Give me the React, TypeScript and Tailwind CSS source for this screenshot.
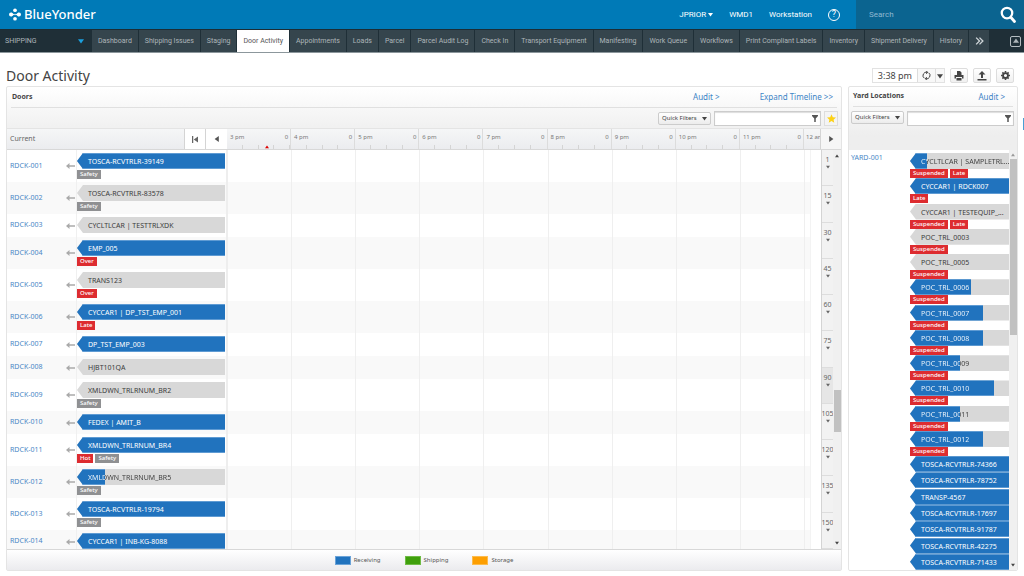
import { Fragment } from 'react';
import type { ReactNode } from 'react';

interface Trailer {
  label: string;
  fill: number;
  tags?: string[];
}

interface Door extends Trailer {
  id: string;
}

const TABS = [
  'Dashboard',
  'Shipping Issues',
  'Staging',
  'Door Activity',
  'Appointments',
  'Loads',
  'Parcel',
  'Parcel Audit Log',
  'Check In',
  'Transport Equipment',
  'Manifesting',
  'Work Queue',
  'Workflows',
  'Print Compliant Labels',
  'Inventory',
  'Shipment Delivery',
  'History',
];

const DOORS: Door[] = [
  { id: 'RDCK-001', label: 'TOSCA-RCVTRLR-39149', fill: 100, tags: ['Safety'] },
  { id: 'RDCK-002', label: 'TOSCA-RCVTRLR-83578', fill: 0, tags: ['Safety'] },
  { id: 'RDCK-003', label: 'CYCLTLCAR | TESTTRLXDK', fill: 0 },
  { id: 'RDCK-004', label: 'EMP_005', fill: 100, tags: ['Over'] },
  { id: 'RDCK-005', label: 'TRANS123', fill: 0, tags: ['Over'] },
  { id: 'RDCK-006', label: 'CYCCAR1 | DP_TST_EMP_001', fill: 100, tags: ['Late'] },
  { id: 'RDCK-007', label: 'DP_TST_EMP_003', fill: 100 },
  { id: 'RDCK-008', label: 'HJBT101QA', fill: 0 },
  { id: 'RDCK-009', label: 'XMLDWN_TRLRNUM_BR2', fill: 0, tags: ['Safety'] },
  { id: 'RDCK-010', label: 'FEDEX | AMIT_B', fill: 100 },
  { id: 'RDCK-011', label: 'XMLDWN_TRLRNUM_BR4', fill: 100, tags: ['Hot', 'Safety'] },
  { id: 'RDCK-012', label: 'XMLDWN_TRLRNUM_BR5', fill: 19, tags: ['Safety'] },
  { id: 'RDCK-013', label: 'TOSCA-RCVTRLR-19794', fill: 100, tags: ['Safety'] },
  { id: 'RDCK-014', label: 'CYCCAR1 | INB-KG-8088', fill: 100 },
];

const YARD: Trailer[] = [
  { label: 'CYCLTLCAR | SAMPLETRL...', fill: 17, tags: ['Suspended', 'Late'] },
  { label: 'CYCCAR1 | RDCK007', fill: 100, tags: ['Late'] },
  { label: 'CYCCAR1 | TESTEQUIP_...', fill: 0, tags: ['Suspended', 'Late'] },
  { label: 'POC_TRL_0003', fill: 0, tags: ['Suspended'] },
  { label: 'POC_TRL_0005', fill: 0, tags: ['Suspended'] },
  { label: 'POC_TRL_0006', fill: 62, tags: ['Suspended'] },
  { label: 'POC_TRL_0007', fill: 74, tags: ['Suspended'] },
  { label: 'POC_TRL_0008', fill: 74, tags: ['Suspended'] },
  { label: 'POC_TRL_0009', fill: 51, tags: ['Suspended'] },
  { label: 'POC_TRL_0010', fill: 85, tags: ['Suspended'] },
  { label: 'POC_TRL_0011', fill: 51, tags: ['Suspended'] },
  { label: 'POC_TRL_0012', fill: 74, tags: ['Suspended'] },
  { label: 'TOSCA-RCVTRLR-74366', fill: 100 },
  { label: 'TOSCA-RCVTRLR-78752', fill: 100 },
  { label: 'TRANSP-4567', fill: 100 },
  { label: 'TOSCA-RCVTRLR-17697', fill: 100 },
  { label: 'TOSCA-RCVTRLR-91787', fill: 100 },
  { label: 'TOSCA-RCVTRLR-42275', fill: 100 },
  { label: 'TOSCA-RCVTRLR-71433', fill: 100 },
];

const HOURS = ['3 pm', '4 pm', '5 pm', '6 pm', '7 pm', '8 pm', '9 pm', '10 pm', '11 pm'];
const PAGES = [1, 15, 30, 45, 60, 75, 90, 105, 120, 135, 150];

const LEGEND = [
  { label: 'Receiving', color: 'bg-[#2173be] border-[#6ba3d8]' },
  { label: 'Shipping', color: 'bg-[#3f9f0c] border-[#6fbb46]' },
  { label: 'Storage', color: 'bg-[#fd9f02] border-[#fdbb4c]' },
];

const Triangle = ({ dir, className }: { dir: 'up' | 'down' | 'left' | 'right'; className: string }) => {
  const points = {
    up: '0,8 10,8 5,1',
    down: '0,2 10,2 5,9',
    left: '8,0 8,10 1,5',
    right: '2,0 2,10 9,5',
  };
  return (
    <svg viewBox="0 0 10 10" className={className} fill="currentColor" aria-hidden="true">
      <polygon points={points[dir]} />
    </svg>
  );
};

const Logo = () => (
  <svg viewBox="0 0 24 26" className="h-[13px] w-3" fill="#fff" aria-hidden="true">
    <circle cx="12" cy="4.500" r="3.700" />
    <circle cx="12" cy="21.500" r="3.700" />
    <circle cx="4" cy="13" r="4" />
    <circle cx="20" cy="13" r="4" />
    <path d="M4 9l7 4-7 4zM20 9l-7 4 7 4z" />
    <circle cx="12" cy="13" r="1.500" />
  </svg>
);

const Tag = ({ name }: { name: string }) => (
  <span
    className={`h-[9px] px-[3px] text-[6px] leading-[9px] font-medium text-white ${
      name === 'Safety' ? 'bg-[#8f9092]' : 'bg-[#dd2c30]'
    }`}
  >
    {name}
  </span>
);

const TagList = ({ tags }: { tags: string[] }) => (
  <div className="flex gap-0.5">
    {tags.map((tag) => (
      <Tag key={tag} name={tag} />
    ))}
  </div>
);

const TrailerBar = ({ label, fill }: Trailer) => {
  const partial = fill > 0 && fill < 100;
  return (
    <div className="relative h-4 bg-[#d8d8d8] text-[7px] leading-[17px] [clip-path:polygon(6px_0,100%_0,100%_100%,6px_100%,0_50%)]">
      {fill > 0 && (
        <div
          className="absolute inset-y-0 left-0 border-y border-[#5f9bd3] bg-[#2173be]"
          style={{ width: `${fill}%` }}
        />
      )}
      <span
        className={`relative block pl-[11px] whitespace-nowrap ${
          partial ? 'bg-clip-text text-transparent' : fill ? 'text-white' : 'text-[#3c3c3c]'
        }`}
        style={
          partial
            ? { backgroundImage: `linear-gradient(to right, #fff ${fill}%, #3c3c3c ${fill}%)` }
            : undefined
        }
      >
        {label}
      </span>
    </div>
  );
};

const QuickFilters = () => (
  <button className="flex h-[13px] w-[53px] shrink-0 items-center justify-between rounded-xs border border-[#ccc] bg-linear-to-b from-white to-[#ececec] px-[3px] text-[6px] whitespace-nowrap text-[#444]">
    Quick Filters
    <Triangle dir="down" className="size-[5px]" />
  </button>
);

const FilterBox = ({ label }: { label: string }) => (
  <div className="relative h-[15px] w-[107px]">
    <input
      type="text"
      aria-label={label}
      className="block h-full w-full border border-[#ccc] bg-white pr-3 pl-1 text-[7px] shadow-[inset_0_1px_1px_#ddd] outline-none"
    />
    <svg viewBox="0 0 12 14" className="absolute top-1 right-[3px] h-[7px] w-1.5" fill="#555" aria-hidden="true">
      <path d="M0 0h12v2L7.500 7v7h-3V7L0 2z" />
    </svg>
  </div>
);

const IconButton = ({ label, children }: { label: string; children: ReactNode }) => (
  <button
    aria-label={label}
    className="flex h-[15px] w-[18px] items-center justify-center rounded-xs border border-[#ddd] bg-linear-to-b from-white to-[#f0f0f0] text-[#444]"
  >
    {children}
  </button>
);

const Header = () => (
  <header className="flex h-[29px] shrink-0 items-stretch bg-[#007ab7] text-white">
    <div className="flex items-center gap-[3px] pl-[9px] text-[13px] leading-none font-medium">
      <Logo />
      BlueYonder
    </div>
    <div className="ml-auto flex items-center gap-4 pr-4 font-['Roboto',sans-serif] text-[8px]">
      <button className="flex items-center gap-0.5">
        JPRIOR
        <Triangle dir="down" className="size-[5px]" />
      </button>
      <a href="#wmd1">WMD1</a>
      <a href="#workstation">Workstation</a>
      <button
        aria-label="Help"
        className="flex size-3 items-center justify-center rounded-full border border-white text-[9px] leading-none"
      >
        ?
      </button>
    </div>
    <div className="flex w-[168px] items-center bg-[#0b6490] pr-2 pl-[13px]">
      <input
        type="search"
        placeholder="Search"
        aria-label="Search"
        className="min-w-0 flex-1 bg-transparent font-['Roboto',sans-serif] text-[8px] text-white outline-none placeholder:text-[#8fb8d0]"
      />
      <button aria-label="Run search">
        <svg viewBox="0 0 32 34" className="h-[17px] w-4" fill="none" stroke="#fff" aria-hidden="true">
          <circle cx="14" cy="14" r="10.500" strokeWidth="4.500" />
          <path d="M22 23l7 8" strokeWidth="5.500" strokeLinecap="round" />
        </svg>
      </button>
    </div>
  </header>
);

const NavBar = () => (
  <nav className="flex h-6 shrink-0 items-stretch border-t border-b border-t-[#1c2d35] border-b-[#8c979c] bg-[#1f2f37] font-['Roboto',sans-serif] text-[7px] text-[#adb5b9]">
    <div className="relative w-[92px]">
      <select
        aria-label="Module"
        className="h-full w-full appearance-none bg-transparent pl-[5px] text-[7px] outline-none"
      >
        <option>SHIPPING</option>
      </select>
      <Triangle dir="down" className="pointer-events-none absolute top-2 right-2 size-1.5 text-[#1ba1e0]" />
    </div>
    <div className="flex flex-1 gap-px">
      {TABS.map((tab) => (
        <a
          key={tab}
          href={`#${tab}`}
          className={`flex flex-auto items-center justify-center whitespace-nowrap ${
            tab === 'Door Activity' ? 'bg-white text-[#555]' : 'bg-[#35454d]'
          }`}
        >
          {tab}
        </a>
      ))}
      <button aria-label="More tabs" className="flex w-5 items-center justify-center bg-[#35454d]">
        <svg viewBox="0 0 16 14" className="h-2 w-[9px]" fill="none" stroke="#cfd5d8" strokeWidth="2.400" aria-hidden="true">
          <path d="M2 1l6 6-6 6M8 1l6 6-6 6" />
        </svg>
      </button>
    </div>
    <div className="flex w-[35px] items-center justify-end pr-[3px]">
      <button
        aria-label="Collapse"
        className="flex size-[11px] items-center justify-center rounded-xs border border-[#b4bcc0]"
      >
        <Triangle dir="up" className="size-1.5" />
      </button>
    </div>
  </nav>
);

const TitleRow = () => (
  <div className="flex h-[33px] shrink-0 items-center pt-3 pr-1">
    <h1 className="text-[14px] leading-none text-[#444]">Door Activity</h1>
    <div className="ml-auto flex items-center gap-[5px]">
      <div className="flex h-[15px] items-center border border-[#e2e2e2] text-[9px] text-[#444]">
        <span className="px-[5px]">3:38 pm</span>
        <button aria-label="Refresh" className="flex h-full w-[18px] items-center justify-center border-l border-[#ddd] bg-[#f8f8f8]">
          <svg viewBox="0 0 20 20" className="size-[9px]" fill="none" stroke="#444" strokeWidth="2.200" aria-hidden="true">
            <path d="M5 16A7.500 7.500 0 0 1 12 3M15 4a7.500 7.500 0 0 1-7 13" />
            <path d="M9 0l4 3-4 3M11 20l-4-3 4-3" />
          </svg>
        </button>
        <button aria-label="Refresh options" className="flex h-full w-[9px] items-center justify-center border-l border-[#ddd] bg-[#f8f8f8]">
          <Triangle dir="down" className="size-1.5" />
        </button>
      </div>
      <IconButton label="Print">
        <svg viewBox="0 0 20 20" className="size-2.5" fill="currentColor" aria-hidden="true">
          <path d="M6 0h6l3 3v5H6zM1 8h18v7h-3v-3H4v3H1zM5 14h10v5H5z" />
        </svg>
      </IconButton>
      <IconButton label="Export">
        <svg viewBox="0 0 20 20" className="size-2.5" fill="currentColor" aria-hidden="true">
          <path d="M10 0l7 7h-5v7H8V7H3zM1 16h18v3H1z" />
        </svg>
      </IconButton>
      <IconButton label="Settings">
        <svg viewBox="0 0 20 20" className="size-[9px]" fill="none" stroke="currentColor" aria-hidden="true">
          <circle cx="10" cy="10" r="5.500" strokeWidth="4" />
          <path
            d="M10 0v4M10 16v4M0 10h4M16 10h4M3 3l3 3M14 14l3 3M17 3l-3 3M6 14l-3 3"
            strokeWidth="3.500"
          />
        </svg>
      </IconButton>
    </div>
  </div>
);

const TimelineHeader = () => (
  <div className="flex h-[22px] shrink-0 items-stretch border-t border-b border-t-[#e4e4e4] border-b-[#d8d8d8] bg-linear-to-b from-[#f5f6f7] to-[#ebecef] text-[7px] text-[#666]">
    <div className="flex w-[177px] items-center pl-[3px]">Current</div>
    <button aria-label="Jump to start" className="flex w-[21px] items-center justify-center border-l border-[#d4d4d4] bg-white">
      <svg viewBox="0 0 12 14" className="h-[7px] w-1.5" fill="#666" aria-hidden="true">
        <path d="M0 0h2.500v14H0zM12 1v12L3.500 7z" />
      </svg>
    </button>
    <button aria-label="Earlier" className="flex w-[22px] items-center justify-center border-l border-[#d4d4d4] bg-white">
      <Triangle dir="left" className="size-1.5 text-[#555]" />
    </button>
    <div className="flex flex-1 overflow-hidden text-[6px] leading-none text-[#777]">
      {HOURS.map((hour, i) => (
        <div key={hour} className="flex flex-1 flex-col justify-between border-r border-[#dcdcdc]">
          <div className="flex justify-between pt-[5px] pr-0.5 pl-[3px]">
            <span>{hour}</span>
            <span>0</span>
          </div>
          <div className="relative grid h-1 grid-cols-4 divide-x divide-[#d4d4d4]">
            <span />
            <span />
            <span />
            <span />
            {i === 0 && <Triangle dir="up" className="absolute bottom-0 left-[38px] size-1 text-[#d00]" />}
          </div>
        </div>
      ))}
      <div className="w-4 pt-[5px] pl-0.5 whitespace-nowrap">12 am</div>
    </div>
    <button aria-label="Later" className="flex w-[21px] items-center justify-center border-l border-[#d4d4d4] bg-[#f6f6f6]">
      <Triangle dir="right" className="size-1.5 text-[#555]" />
    </button>
  </div>
);

const DoorRow = ({ id, ...trailer }: Door) => (
  <li className="flex min-h-[23px] shrink-0 bg-white even:bg-[#f9f9f9]">
    <a href={`#${id}`} className="flex w-[59px] items-center pl-[3px] text-[7px] text-[#4a87c6]">
      {id}
    </a>
    <div className="flex w-[11px] items-center border-r border-[#f0f0f0]">
      <svg viewBox="0 0 18 12" className="h-1.5 w-[9px]" fill="#aaa" aria-hidden="true">
        <path d="M7 0v4.500h11v3H7V12L0 6z" />
      </svg>
    </div>
    <div className="flex w-[148px] flex-col gap-px py-[3px]">
      <TrailerBar {...trailer} />
      {trailer.tags && <TagList tags={trailer.tags} />}
    </div>
    <div className="ml-px w-0.5 bg-[#eee]" />
    <div className="flex flex-1">
      {HOURS.map((hour) => (
        <div key={hour} className="flex-1 border-r border-[#efefef]" />
      ))}
      <div className="w-1.5 border-r border-[#f3f3f3]" />
      <div className="w-2.5 bg-white" />
    </div>
  </li>
);

const DoorsPanel = () => (
  <section className="flex min-w-0 flex-1 flex-col overflow-hidden rounded-xs border border-[#e4e4e4] bg-linear-to-b from-white to-[#eee] to-10%">
    <div className="mx-1 flex h-[21px] shrink-0 items-center border-b border-[#e0e0e0] pr-1 text-[8px] text-[#3d84c6]">
      <h2 className="pl-px text-[7px] font-bold text-[#444]">Doors</h2>
      <a href="#audit-doors" className="ml-auto">
        Audit &gt;
      </a>
      <a href="#timeline" className="ml-10">
        Expand Timeline &gt;&gt;
      </a>
    </div>
    <div className="flex h-5 shrink-0 items-center justify-end gap-[3px] pr-[3px]">
      <QuickFilters />
      <FilterBox label="Filter doors" />
      <button
        aria-label="Favorite"
        className="flex h-[15px] w-[14px] items-center justify-center border border-[#ddd] bg-[#f4f4f4]"
      >
        <svg viewBox="0 0 20 19" className="size-[9px]" fill="#fcd116" aria-hidden="true">
          <path d="M10 0l2.900 6.600 7.100.7-5.400 4.700 1.600 7L10 15.300 3.800 19l1.600-7L0 7.300l7.100-.7z" />
        </svg>
      </button>
    </div>
    <TimelineHeader />
    <div className="flex min-h-0 flex-1">
      <ul className="flex min-h-0 flex-1 flex-col overflow-hidden">
        {DOORS.map((door) => (
          <DoorRow key={door.id} {...door} />
        ))}
      </ul>
      <div className="flex w-3 flex-col border-l border-[#d4d4d4] bg-[#f2f2f2] text-[7px] text-[#666]">
        {PAGES.map((page) => (
          <button
            key={page}
            className={`flex flex-1 flex-col items-center justify-start overflow-hidden border-b border-[#ddd] pt-[5px] leading-[10px] ${
              page === 90 ? 'bg-[#e6e6e6]' : ''
            }`}
          >
            {page}
            <Triangle dir="down" className="size-1 shrink-0" />
          </button>
        ))}
      </div>
      <div className="flex w-2 flex-col items-center justify-between bg-[#f0f0f0] py-1 text-[#444]">
        <Triangle dir="up" className="size-1" />
        <div className="mt-[232px] mb-auto h-[42px] w-[7px] bg-[#c1c1c1]" />
        <Triangle dir="down" className="size-1" />
      </div>
    </div>
    <footer className="flex h-[21px] shrink-0 items-center justify-center gap-6 border-t border-[#d8d8d8] bg-linear-to-b from-white to-[#ebebee] text-[6px] text-[#555]">
      {LEGEND.map(({ label, color }) => (
        <span key={label} className="flex items-center gap-[3px]">
          <i className={`h-[9px] w-4 border ${color}`} />
          {label}
        </span>
      ))}
    </footer>
  </section>
);

const YardPanel = () => (
  <section className="flex w-[170px] shrink-0 flex-col overflow-hidden rounded-xs border border-[#e4e4e4] bg-linear-to-b from-white to-[#eee] to-10%">
    <div className="mx-1 flex h-5 shrink-0 items-center justify-between border-b border-[#e0e0e0] pr-2 text-[8px] text-[#3d84c6]">
      <h2 className="text-[7px] font-bold text-[#444]">Yard Locations</h2>
      <a href="#audit-yard">Audit &gt;</a>
    </div>
    <div className="flex h-[43px] shrink-0 items-start justify-between pt-1 pr-[3px] pl-0.5">
      <QuickFilters />
      <FilterBox label="Filter yard locations" />
    </div>
    <div className="flex min-h-0 flex-1 bg-white">
      <a href="#yard-001" className="w-[61px] pt-[3px] pl-0.5 text-[7px] leading-[10px] text-[#4a87c6]">
        YARD-001
      </a>
      <ul className="flex min-w-0 flex-1 flex-col justify-between pt-[3px]">
        {YARD.map((trailer) => (
          <li key={trailer.label}>
            <TrailerBar {...trailer} />
            {trailer.tags && <TagList tags={trailer.tags} />}
          </li>
        ))}
      </ul>
      <div className="flex w-2 flex-col items-center bg-[#f0f0f0] py-[3px] text-[#444]">
        <Triangle dir="up" className="size-1 text-[#999]" />
        <div className="mt-0.5 h-44 w-[7px] bg-[#c1c1c1]" />
        <Triangle dir="down" className="mt-auto size-1" />
      </div>
    </div>
  </section>
);

const App = () => (
  <Fragment>
    <div className="flex h-screen min-h-[576px] flex-col overflow-hidden bg-white font-['Noto_Sans',sans-serif]">
      <Header />
      <NavBar />
      <main className="flex min-h-0 flex-1 flex-col px-1.5 pb-[5px]">
        <TitleRow />
        <div className="flex min-h-0 flex-1 gap-1.5">
          <DoorsPanel />
          <YardPanel />
        </div>
      </main>
    </div>
    <div className="fixed top-[118px] right-0 h-3 w-px bg-[#4a9fd4]" />
  </Fragment>
);

export default App;
